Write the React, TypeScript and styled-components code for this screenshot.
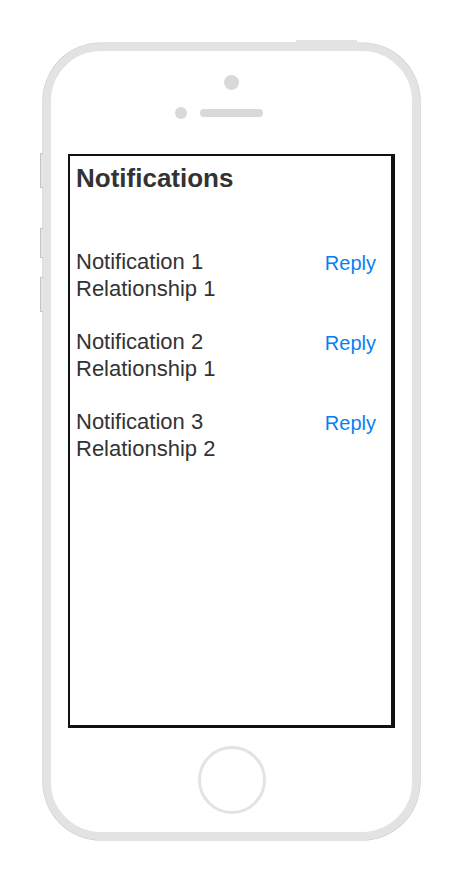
import React from "react";
import styled, { createGlobalStyle } from "styled-components";

const Global = createGlobalStyle`
  html, body { margin: 0; padding: 0; background: #ffffff; }
  body { font-family: "Liberation Sans", Arial, sans-serif; }
`;

const Page = styled.div`
  width: 460px;
  height: 880px;
  padding: 43px 0 0 43px;
  box-sizing: border-box;
`;

const Phone = styled.div`
  position: relative;
  width: 377px;
  height: 797px;
  box-sizing: border-box;
  border: 8px solid #e2e3e5;
  border-radius: 58px;
  box-shadow: 0 0 0 0.6px #c9cacc;
  background: #ffffff;
  display: flex;
  flex-direction: column;
  align-items: center;
`;

const SideButton = styled.div<{ $top: number; $height: number }>`
  position: absolute;
  left: -11px;
  top: ${(p) => p.$top}px;
  width: 3px;
  height: ${(p) => p.$height}px;
  background: #e4e5e7;
  border: 0.6px solid #c4c5c7;
  border-right: none;
  box-sizing: border-box;
`;

const TopButton = styled.div`
  position: absolute;
  top: -11px;
  left: 245px;
  width: 61px;
  height: 3px;
  background: #e2e3e5;
`;

const Camera = styled.div`
  margin-top: 24px;
  width: 15px;
  height: 15px;
  border-radius: 50%;
  background: #d9d9d9;
`;

const SpeakerRow = styled.div`
  margin-top: 17px;
  display: flex;
  align-items: center;
  gap: 13px;
  padding-right: 25px;
`;

const Sensor = styled.div`
  width: 12px;
  height: 12px;
  border-radius: 50%;
  background: #d9d9d9;
`;

const Speaker = styled.div`
  width: 63px;
  height: 8px;
  border-radius: 4px;
  background: #d9d9d9;
`;

const Screen = styled.div`
  margin-top: 35px;
  width: 327px;
  height: 574px;
  box-sizing: border-box;
  border-style: solid;
  border-color: #111111;
  border-width: 2px 4px 3px 2px;
  background: #ffffff;
  padding: 7px 15px 0 6px;
  color: #333333;
`;

const Title = styled.h1`
  margin: 0;
  font-family: "Liberation Sans", Arial, sans-serif;
  font-weight: 700;
  font-size: 26px;
  line-height: 30px;
  color: #333333;
`;

const List = styled.div`
  margin-top: 55px;
  display: flex;
  flex-direction: column;
  gap: 26px;
`;

const Item = styled.div`
  display: flex;
  justify-content: space-between;
  align-items: flex-start;
`;

const Lines = styled.div`
  display: flex;
  flex-direction: column;
  font-size: 22px;
  line-height: 27px;
  color: #333333;
`;

const Reply = styled.a`
  margin-top: 2px;
  font-size: 20px;
  line-height: 27px;
  color: #0a7ff2;
  text-decoration: none;
  cursor: pointer;
`;

const HomeButton = styled.div`
  margin-top: 18px;
  width: 68px;
  height: 68px;
  box-sizing: border-box;
  border-radius: 50%;
  border: 3px solid #e2e3e5;
`;

const items = [
  { title: "Notification 1", rel: "Relationship 1" },
  { title: "Notification 2", rel: "Relationship 1" },
  { title: "Notification 3", rel: "Relationship 2" },
];

export default function App() {
  return (
    <>
      <Global />
      <Page>
        <Phone>
          <TopButton />
          <SideButton $top={102} $height={35} />
          <SideButton $top={177} $height={30} />
          <SideButton $top={226} $height={35} />
          <Camera />
          <SpeakerRow>
            <Sensor />
            <Speaker />
          </SpeakerRow>
          <Screen>
            <Title>Notifications</Title>
            <List>
              {items.map((it) => (
                <Item key={it.title}>
                  <Lines>
                    <span>{it.title}</span>
                    <span>{it.rel}</span>
                  </Lines>
                  <Reply>Reply</Reply>
                </Item>
              ))}
            </List>
          </Screen>
          <HomeButton />
        </Phone>
      </Page>
    </>
  );
}
